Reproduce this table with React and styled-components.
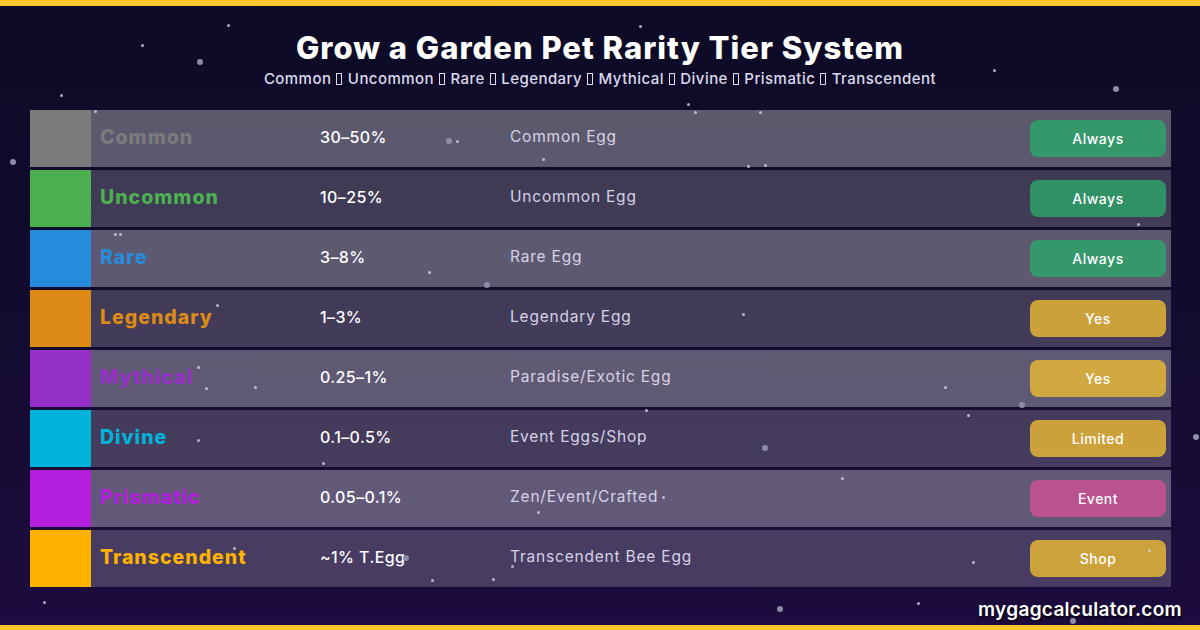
import styled, { createGlobalStyle } from 'styled-components';

const GlobalStyle = createGlobalStyle`
  html, body {
    margin: 0;
    padding: 0;
    background: #0d0b26;
  }
  * {
    box-sizing: border-box;
  }
`;

const Page = styled.div`
  position: relative;
  width: 1200px;
  height: 630px;
  overflow: hidden;
  display: flex;
  flex-direction: column;
  font-family: 'Inter', 'Noto Sans', sans-serif;
  color: #fff;
  background: linear-gradient(180deg, #0d0b26 0%, #120b2e 45%, #1d0c3e 100%);
`;

const Bar = styled.div`
  height: ${(p) => p.$h}px;
  flex-shrink: 0;
  background: #ffc62b;
`;

const Header = styled.header`
  display: flex;
  flex-direction: column;
  align-items: center;
  padding-top: 26px;
  height: 104px;
`;

const Title = styled.h1`
  margin: 0;
  font-size: 31px;
  line-height: 32px;
  font-weight: 800;
  letter-spacing: 1px;
`;

const Subtitle = styled.p`
  margin: 6px 0 0;
  font-size: 15px;
  line-height: 18px;
  font-weight: 500;
  letter-spacing: 0.45px;
  color: #dcdaec;
  display: flex;
  align-items: center;
  gap: 4px;
`;

const Tofu = styled.span`
  display: inline-block;
  width: 6px;
  height: 12px;
  border: 1px solid #dcdaec;
  margin: 0 1px;
  vertical-align: -1px;
`;

const Table = styled.div`
  display: flex;
  flex-direction: column;
  gap: 3px;
  margin: 0 29px 0 30px;
`;

const Row = styled.div`
  display: grid;
  grid-template-columns: 61px 229px 190px 1fr 136px;
  align-items: center;
  height: 57px;
  padding-right: 5px;
  background: ${(p) => (p.$light ? 'rgba(255,255,255,0.32)' : 'rgba(255,255,255,0.2)')};
`;

const Swatch = styled.div`
  height: 100%;
  background: ${(p) => p.$color};
`;

const Name = styled.div`
  padding-left: 9px;
  margin-top: -4px;
  font-size: 19.5px;
  font-weight: 800;
  letter-spacing: 1px;
  color: ${(p) => p.$color};
`;

const Chance = styled.div`
  margin-top: -4px;
  font-size: 16px;
  font-weight: 500;
  letter-spacing: 0.4px;
  color: #fff;
`;

const Egg = styled.div`
  margin-top: -4px;
  font-size: 15.5px;
  font-weight: 400;
  letter-spacing: 0.8px;
  color: #d6d2e6;
`;

const badgeColors = {
  green: 'rgba(44,167,105,0.8)',
  gold: 'rgba(237,188,51,0.8)',
  pink: 'rgba(202,81,151,0.85)',
};

const Badge = styled.div`
  height: 37px;
  border-radius: 8px;
  display: flex;
  align-items: center;
  justify-content: center;
  padding-bottom: 1px;
  font-size: 14px;
  font-weight: 500;
  letter-spacing: 0.5px;
  color: #fff;
  background: ${(p) => badgeColors[p.$tone]};
`;

const Footer = styled.div`
  flex: 1;
  display: flex;
  justify-content: flex-end;
  align-items: center;
  padding: 6px 18px 0 0;
  font-size: 19px;
  font-weight: 600;
  letter-spacing: 0.3px;
  text-shadow: 1px 2px 2px rgba(0, 0, 0, 0.8);
`;

const Sky = styled.div`
  position: absolute;
  inset: 0;
  pointer-events: none;
`;

const Dot = styled.span`
  position: absolute;
  width: 6px;
  height: 6px;
  border-radius: 50%;
  background: #8e8ca6;
`;

const Spark = styled.span`
  position: absolute;
  width: 3px;
  height: 3px;
  background: #d8d6e8;
  border-radius: 50%;
  opacity: 0.8;
`;

const tiers = [
  { name: 'Common', color: '#7b7b7b', chance: '30–50%', egg: 'Common Egg', badge: 'Always', tone: 'green' },
  { name: 'Uncommon', color: '#4caf50', chance: '10–25%', egg: 'Uncommon Egg', badge: 'Always', tone: 'green' },
  { name: 'Rare', color: '#278bdc', chance: '3–8%', egg: 'Rare Egg', badge: 'Always', tone: 'green' },
  { name: 'Legendary', color: '#dc8b17', chance: '1–3%', egg: 'Legendary Egg', badge: 'Yes', tone: 'gold' },
  { name: 'Mythical', color: '#9430c8', chance: '0.25–1%', egg: 'Paradise/Exotic Egg', badge: 'Yes', tone: 'gold' },
  { name: 'Divine', color: '#00b3d9', chance: '0.1–0.5%', egg: 'Event Eggs/Shop', badge: 'Limited', tone: 'gold' },
  { name: 'Prismatic', color: '#b31fdc', chance: '0.05–0.1%', egg: 'Zen/Event/Crafted', badge: 'Event', tone: 'pink' },
  { name: 'Transcendent', color: '#ffb300', chance: '~1% T.Egg', egg: 'Transcendent Bee Egg', badge: 'Shop', tone: 'gold' },
];

const dots = [
  [200, 62], [13, 162], [449, 141], [487, 285], [1116, 89], [1022, 405],
  [1196, 437], [765, 448], [406, 558], [780, 609], [1073, 621],
];

const sparks = [
  [228, 25], [142, 45], [61, 95], [95, 111], [457, 141], [543, 159], [748, 166],
  [765, 165], [115, 234], [120, 234], [429, 272], [217, 305], [743, 314],
  [198, 367], [255, 387], [206, 388], [945, 387], [968, 415], [646, 410],
  [198, 440], [323, 463], [842, 478], [538, 512], [663, 497], [234, 548],
  [512, 566], [432, 580], [493, 579], [973, 562], [1149, 550], [1138, 224],
  [688, 104], [695, 112], [760, 112], [44, 602], [918, 603], [994, 70],
  [640, 26],
];

const subtitleParts = ['Common', 'Uncommon', 'Rare', 'Legendary', 'Mythical', 'Divine', 'Prismatic', 'Transcendent'];

export default function App() {
  return (
    <>
      <GlobalStyle />
      <Page>
        <Bar $h={6} />
        <Header>
          <Title>Grow a Garden Pet Rarity Tier System</Title>
          <Subtitle>
            {subtitleParts.map((p, i) => (
              <span key={p}>
                {i > 0 && <Tofu />} {p}
              </span>
            ))}
          </Subtitle>
        </Header>
        <Table>
          {tiers.map((t, i) => (
            <Row key={t.name} $light={i % 2 === 0}>
              <Swatch $color={t.color} />
              <Name $color={t.color}>{t.name}</Name>
              <Chance>{t.chance}</Chance>
              <Egg>{t.egg}</Egg>
              <Badge $tone={t.tone}>{t.badge}</Badge>
            </Row>
          ))}
        </Table>
        <Footer>mygagcalculator.com</Footer>
        <Bar $h={5} />
        <Sky>
          {dots.map(([x, y]) => (
            <Dot key={`d${x}-${y}`} style={{ left: x - 3, top: y - 3 }} />
          ))}
          {sparks.map(([x, y]) => (
            <Spark key={`s${x}-${y}`} style={{ left: x - 1, top: y - 1 }} />
          ))}
        </Sky>
      </Page>
    </>
  );
}
